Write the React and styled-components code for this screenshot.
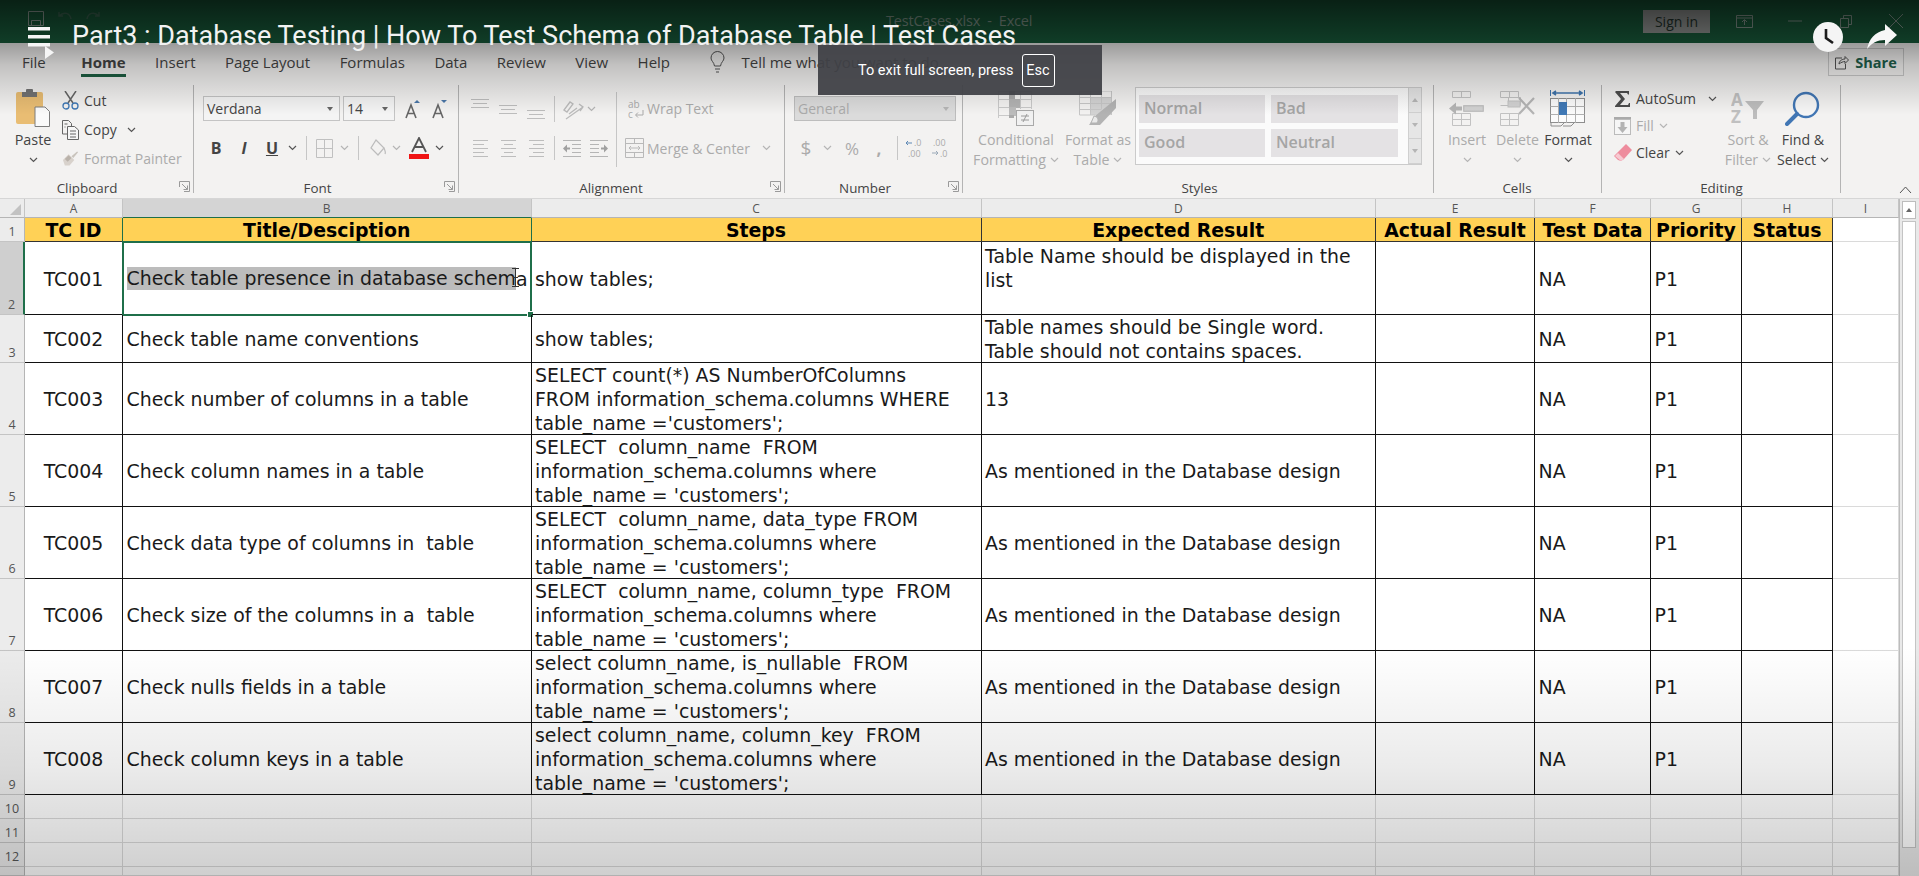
import React from 'react';
import styled, { createGlobalStyle } from 'styled-components';

const UI = "'Open Sans', 'Noto Sans', sans-serif";
const SHEET = "'DejaVu Sans', Verdana, sans-serif";
const DIM = '#ababab';
const INK = '#444444';
const GREEN = '#1f6f4a';

const Global = createGlobalStyle`
  html, body { margin: 0; padding: 0; background: #fff; }
  #root { width: 1919px; height: 876px; }
`;

const Page = styled.div`
  position: relative;
  width: 1919px;
  height: 876px;
  overflow: hidden;
  font-family: ${UI};
  color: ${INK};
  background: #f3f2f1;
`;

/* ---------- window chrome ---------- */
const TitleBar = styled.div`
  height: 43px;
  display: flex;
  align-items: center;
  background: #195f3d;
  color: #9fb5aa;
`;
const Qat = styled.div`
  width: 858px;
  padding-left: 28px;
  display: flex;
  align-items: center;
  gap: 14px;
  flex: none;
  margin-top: -7px;
`;
const DocName = styled.div`
  font-size: 14.5px;
  margin-top: -3px;
  letter-spacing: -0.2px;
  white-space: pre;
  color: #8aa094;
`;
const WindowTools = styled.div`
  margin-left: auto;
  display: flex;
  align-items: center;
  padding-right: 16px;
`;
const SignIn = styled.div`
  width: 67px;
  height: 23px;
  margin-top: -1px;
  background: #9c9f9d;
  color: #24352d;
  font-size: 14px;
  line-height: 23px;
  text-align: center;
`;
const WinIcon = styled.svg`
  display: block;
  flex: none;
  margin-left: ${p => p.$ml}px;
  margin-top: -1px;
`;

const Tabs = styled.div`
  height: 42px;
  box-sizing: border-box;
  padding: 0 15px 4px 22px;
  display: flex;
  align-items: center;
  gap: 29.5px;
  font-size: 15px;
`;
const Tab = styled.div`
  position: relative;
  white-space: nowrap;
  margin-right: ${p => p.$mr || 0}px;
  font-weight: ${p => (p.$active ? 700 : 400)};
  &::after {
    content: ${p => (p.$active ? "''" : 'none')};
    position: absolute;
    left: 0;
    right: 0;
    bottom: -5px;
    height: 3px;
    background: #1d5f42;
  }
`;
const TellMe = styled.div`
  display: flex;
  align-items: center;
  gap: 17px;
  margin-left: 10px;
  white-space: nowrap;
`;
const ShareButton = styled.div`
  margin-left: auto;
  width: 76px;
  height: 28px;
  box-sizing: border-box;
  border: 1px solid #c8c8c8;
  display: flex;
  align-items: center;
  justify-content: center;
  gap: 6px;
  font-size: 14.5px;
  font-weight: 700;
  color: #205f4b;
`;

/* ---------- ribbon ---------- */
const Ribbon = styled.div`
  height: 114px;
  box-sizing: border-box;
  padding-bottom: 5px;
  display: flex;
  position: relative;
  border-bottom: 1px solid #d6d6d6;
`;
const Group = styled.div`
  width: ${p => p.$w}px;
  flex: none;
  box-sizing: border-box;
  display: flex;
  flex-direction: column;
  position: relative;
  &::after {
    content: '';
    position: absolute;
    right: 0;
    top: 0;
    bottom: 0;
    width: 1px;
    background: #b4b4b4;
  }
`;
const GroupBody = styled.div`
  flex: 1;
  display: flex;
  padding-left: ${p => p.$pl || 0}px;
`;
const GroupFoot = styled.div`
  height: 20px;
  margin-bottom: -5px;
  display: grid;
  grid-template-columns: 1fr auto 1fr;
  align-items: center;
  font-size: 13.4px;
  padding-right: 4px;
`;
const FootLabel = styled.div`
  grid-column: 2;
  transform: translateX(${p => p.$dx || 0}px);
`;
const Launcher = styled.svg`
  grid-column: 3;
  justify-self: end;
  display: block;
  margin-top: -3px;
`;
const Stack = styled.div`
  display: flex;
  flex-direction: column;
  width: ${p => (p.$w ? `${p.$w}px` : 'auto')};
  margin-left: ${p => p.$ml || 0}px;
  padding-top: ${p => p.$pt || 0}px;
  flex: none;
`;
const ToolRow = styled.div`
  display: flex;
  align-items: center;
  height: ${p => p.$h || 25}px;
  margin-top: ${p => p.$mt || 0}px;
  color: ${p => (p.$dim ? DIM : INK)};
  font-size: 14px;
  white-space: nowrap;
`;
const Slot = styled.span`
  display: inline-flex;
  align-items: center;
  justify-content: center;
  flex: none;
  width: ${p => p.$w}px;
  margin-left: ${p => p.$ml || 0}px;
  color: ${p => (p.$dim ? DIM : 'inherit')};
  font-size: ${p => p.$fs || 14}px;
  font-weight: ${p => p.$fw || 400};
  font-style: ${p => (p.$it ? 'italic' : 'normal')};
  text-decoration: ${p => (p.$un ? 'underline' : 'none')};
`;
const RowText = styled.span`
  margin-left: ${p => p.$ml || 0}px;
`;
const RuleV = styled.div`
  width: 1px;
  height: ${p => p.$h}px;
  background: #c6c6c6;
  flex: none;
`;
const Combo = styled.div`
  width: ${p => p.$w}px;
  height: 25px;
  margin-left: ${p => p.$ml || 0}px;
  box-sizing: border-box;
  border: 1px solid ${p => (p.$off ? '#bdbdbd' : '#c4c4c4')};
  background: ${p => (p.$off ? '#dbdbdb' : '#f4f4f4')};
  color: ${p => (p.$off ? DIM : INK)};
  display: flex;
  align-items: center;
  justify-content: space-between;
  padding: 0 6px 0 3px;
  font-size: 14px;
`;
const Caret = styled.i`
  width: 0;
  height: 0;
  border: 3.5px solid transparent;
  border-top: 4px solid ${p => (p.$off ? '#b5b5b5' : '#666')};
  border-bottom: 0;
`;
const PasteColumn = styled.div`
  width: 44px;
  margin-left: 11px;
  padding-top: 4px;
  display: flex;
  flex-direction: column;
  align-items: center;
  font-size: 14.4px;
  flex: none;
`;
const PasteLabel = styled.span`
  margin-top: 3px;
  line-height: 20px;
`;
const PasteChev = styled(Slot)`
  margin-top: 7px;
`;
const BigButton = styled.div`
  width: ${p => p.$w}px;
  margin-left: ${p => p.$ml || 0}px;
  flex: none;
  display: flex;
  flex-direction: column;
  align-items: center;
  color: ${p => (p.$dim ? DIM : INK)};
  font-size: 14.2px;
  line-height: 20px;
  white-space: nowrap;
`;
const BigIcon = styled.div`
  height: 37px;
  margin: 5px 0 3px;
  display: flex;
  align-items: center;
  justify-content: center;
`;
const ChevLine = styled.div`
  height: 20px;
  display: flex;
  align-items: center;
  justify-content: center;
  gap: 4px;
`;
const Gallery = styled.div`
  width: 287px;
  height: 78px;
  margin: 2px 0 0 0;
  box-sizing: border-box;
  border: 1px solid #cbcbcb;
  background: #fbfbfb;
  display: grid;
  grid-template-columns: 126px 127px 1fr;
  grid-template-rows: 28px 28px;
  column-gap: 6px;
  row-gap: 6px;
  padding: 7px 0 0 3px;
  flex: none;
  position: relative;
`;
const StyleCell = styled.div`
  background: #e4e2e4;
  color: #a5a5a5;
  font-size: 16px;
  font-weight: 600;
  padding-left: 5px;
  line-height: 27px;
`;
const GalleryScroll = styled.div`
  grid-column: 3;
  grid-row: 1 / 3;
  margin: -7px 0 -8px 4px;
  height: 76px;
  display: flex;
  flex-direction: column;
  background: #e6e6e6;
  border-left: 1px solid #d0d0d0;
`;
const ScrollStep = styled.div`
  flex: 1;
  display: flex;
  align-items: center;
  justify-content: center;
  border-bottom: 1px solid #d0d0d0;
`;
const UpCaret = styled(Caret)`
  transform: rotate(180deg);
`;
const Collapse = styled.svg`
  position: absolute;
  right: 7px;
  bottom: 4px;
`;

/* ---------- sheet ---------- */
const Sheet = styled.div`
  display: grid;
  grid-template-columns: 25px 98px 408.5px 450px 394.5px 159px 116px 91px 91px 66px 20px;
  grid-template-rows: 19px 24px 73px 48px repeat(6, 72px) 24px 24px 24px 9px;
  height: 677px;
  background: #fff;
`;
const ColHead = styled.div`
  background: ${p => (p.$on ? '#d4d4d4' : '#ececec')};
  border-right: 1px solid #c4c4c4;
  border-bottom: 1px solid ${p => (p.$on ? GREEN : '#b5b5b5')};
  font-size: 12px;
  line-height: 19px;
  text-align: center;
  color: #555;
`;
const CornerBox = styled(ColHead)`
  display: flex;
  align-items: flex-end;
  justify-content: flex-end;
  padding: 0 3px 2px 0;
`;
const RowHead = styled.div`
  background: ${p => (p.$on ? '#cfcfcf' : '#ececec')};
  border-right: ${p => (p.$on ? `2px solid ${GREEN}` : '1px solid #b5b5b5')};
  border-bottom: 1px solid #c4c4c4;
  font-size: 12.5px;
  color: #555;
  display: flex;
  align-items: flex-end;
  justify-content: center;
  box-sizing: border-box;
  line-height: 18px;
`;
const Cell = styled.div`
  box-sizing: border-box;
  min-width: 0;
  position: relative;
  display: flex;
  align-items: ${p => (p.$top ? 'flex-start' : 'center')};
  justify-content: ${p => (p.$center ? 'center' : 'flex-start')};
  padding-left: ${p => (p.$center ? 0 : 3.5)}px;
  padding-top: 1.5px;
  font-family: ${SHEET};
  font-size: 18.9px;
  line-height: 24px;
  color: #1a1a1a;
  white-space: pre;
  border-right: 1.5px solid #111;
  border-bottom: 1.5px solid #111;
`;
const HeadCell = styled(Cell)`
  background: #ffd156;
  font-weight: 700;
  color: #000;
  justify-content: center;
  padding-left: 0;
  border-right: 1px solid ${p => (p.$edge ? GREEN : '#333')};
  border-bottom: 1px solid #333;
`;
const BlankCell = styled.div`
  border-right: 1px solid #dadada;
  border-bottom: 1px solid #dadada;
`;
const SelectedBox = styled.div`
  position: absolute;
  left: -1px;
  right: -1.5px;
  top: -1px;
  bottom: -1.5px;
  border: 2px solid ${GREEN};
  pointer-events: none;
  &::after {
    content: '';
    position: absolute;
    right: -4px;
    bottom: -4px;
    width: 5px;
    height: 5px;
    background: ${GREEN};
    border: 1px solid #fff;
  }
`;
const Highlight = styled.span`
  background: #bcbcbc;
  line-height: 23px;
  display: inline-block;
`;
const Scrollbar = styled.div`
  grid-column: 11;
  grid-row: 1 / -1;
  background: #e9e9e9;
  border-left: 1px solid #bdbdbd;
  padding: 2px 3px 0 2px;
  display: flex;
  flex-direction: column;
  gap: 2px;
`;
const ScrollUp = styled.div`
  height: 16px;
  background: #fff;
  border: 1px solid #bdbdbd;
  display: flex;
  align-items: center;
  justify-content: center;
`;
const ScrollThumb = styled.div`
  height: 627px;
  background: #fff;
  border: 1px solid #c4c4c4;
  box-sizing: border-box;
`;

/* ---------- video player overlay ---------- */
const Shade = styled.div`
  position: absolute;
  left: 0;
  right: 0;
  top: 0;
  height: 120px;
  pointer-events: none;
  background: linear-gradient(180deg, rgba(0,0,0,.66) 0, rgba(0,0,0,.36) 43px, rgba(0,0,0,.2) 65px, rgba(0,0,0,0) 115px);
`;
const BottomShade = styled.div`
  position: absolute;
  left: 0;
  right: 0;
  bottom: 0;
  height: 230px;
  pointer-events: none;
  background: linear-gradient(180deg, rgba(0,0,0,0) 0, rgba(0,0,0,.08) 120px, rgba(0,0,0,.19) 100%);
`;
const VideoTitle = styled.div`
  position: absolute;
  left: 72px;
  top: 18px;
  font-family: Roboto, sans-serif;
  font-size: 27px;
  line-height: 36px;
  color: #f2f2f2;
  white-space: nowrap;
`;
const Overlay = styled.svg`
  position: absolute;
  left: ${p => p.$x}px;
  top: ${p => p.$y}px;
`;
const Toast = styled.div`
  position: absolute;
  left: 818px;
  top: 45px;
  width: 284px;
  height: 50px;
  box-sizing: border-box;
  padding-left: 40px;
  background: rgba(64, 65, 70, .94);
  color: #fff;
  display: flex;
  align-items: center;
  gap: 8px;
  font-family: Roboto, sans-serif;
  font-size: 14.5px;
  white-space: nowrap;
`;
const EscKey = styled.div`
  width: 33px;
  height: 33px;
  box-sizing: border-box;
  border: 1px solid #fff;
  border-radius: 3px;
  display: flex;
  align-items: center;
  justify-content: center;
`;
const IBeam = styled.svg`
  position: absolute;
  left: 388px;
  top: 26px;
`;

/* ---------- drawings ---------- */
const Chev = ({ dim }) => (
  <svg width="9" height="6" viewBox="0 0 9 6" style={{ display: 'block', flex: 'none' }}>
    <path d="M1 1l3.5 3.5L8 1" fill="none" stroke={dim ? '#b5b5b5' : '#555'} strokeWidth="1.2" />
  </svg>
);
const LaunchIcon = () => (
  <Launcher width="11" height="11" viewBox="0 0 11 11">
    <path d="M.5 6V.5H10.5V10.5H5M3 3l5.5 5.5M8.5 4.5v4h-4" fill="none" stroke="#9a9a9a" />
  </Launcher>
);
const PasteIcon = () => (
  <svg width="34" height="38" viewBox="0 0 34 38">
    <rect x="0" y="3" width="27" height="32" rx="2" fill="#e9bd73" />
    <rect x="6" y="3" width="15" height="5" fill="#737373" />
    <rect x="10" y="0" width="7" height="4" rx="1" fill="#737373" />
    <path d="M19 18h10l4.500 4.500V37.500H19z" fill="#fafafa" stroke="#7d7d7d" />
  </svg>
);
const CutIcon = () => (
  <svg width="17" height="19" viewBox="0 0 17 19">
    <path d="M3 0l8 12M14 0L6 12" stroke="#666" strokeWidth="1.5" fill="none" />
    <circle cx="4" cy="15" r="3" fill="none" stroke="#3f78b5" strokeWidth="1.3" />
    <circle cx="13" cy="15" r="3" fill="none" stroke="#3f78b5" strokeWidth="1.3" />
  </svg>
);
const CopyIcon = () => (
  <svg width="17" height="20" viewBox="0 0 17 20" fill="none" stroke="#666">
    <path d="M5 14H.5V.5h6l3 3V6" />
    <path d="M5.500 6.500h7l4 3.500v9.500h-11z" fill="#f6f6f6" />
    <path d="M2.500 4h3M2.500 7h1M8 11h6M8 14h6M8 17h6" />
  </svg>
);
const BrushIcon = () => (
  <svg width="18" height="17" viewBox="0 0 18 17">
    <path d="M1 10l6-6 6 6-5 6H3z" fill="#d8d2cc" />
    <path d="M3 9l4-4 3 3-4 4z" fill="#b9b2aa" />
    <path d="M10 6l6-5 1 1-5 6z" fill="#c9c4bd" />
  </svg>
);
const GrowIcon = ({ down }) => (
  <svg width="15" height="20" viewBox="0 0 15 20">
    <path d="M1 19L6 6l5 13M3 14.500h6" fill="none" stroke="#666" strokeWidth="1.600" />
    <path d={down ? 'M9 1h6l-3 3z' : 'M9 4h6l-3-3z'} fill="#4a76a8" />
  </svg>
);
const BordersIcon = () => (
  <svg width="17" height="19" viewBox="0 0 17 19" fill="none" stroke="#c0c0c0">
    <path d="M.5.500h16v18H.500zM.500 9.500h16M8.500.500v18" />
  </svg>
);
const BucketIcon = () => (
  <svg width="17" height="19" viewBox="0 0 17 19" fill="none" stroke="#bcbcbc" strokeWidth="1.200">
    <path d="M7 1l8 8-6 7-7-7zM15 9c1 3 2 4 1 6" />
  </svg>
);
const FontColorIcon = () => (
  <svg width="20" height="23" viewBox="0 0 20 23">
    <path d="M3 15L10 1l7 14M6 10h8" fill="none" stroke="#555" strokeWidth="1.800" />
    <rect y="17" width="20" height="5" fill="#f01414" />
  </svg>
);
const AlignV = ({ y, w = 18 }) => (
  <svg width={w} height="26" viewBox={`0 0 ${w} 26`} stroke="#bdbdbd">
    <path d={`M0 ${y}.500h${w}M2 ${y + 4}.500h${w - 4}M0 ${y + 8}.500h${w}`} />
  </svg>
);
const AlignH = ({ a }) => {
  const short = a === 'l' ? 'M0 4.500h11M0 12.500h11' : a === 'c' ? 'M3 4.500h9M3 12.500h9' : 'M4 4.500h11M4 12.500h11';
  return (
    <svg width="15" height="17" viewBox="0 0 15 17" stroke="#bdbdbd">
      <path d={`M0 .500h15M0 8.500h15M0 16.500h15 ${short}`} />
    </svg>
  );
};
const OrientIcon = () => (
  <svg width="22" height="22" viewBox="0 0 22 22" fill="none" stroke="#bbb" strokeWidth="1.300">
    <path d="M2 12l6-8 3 2-6 8zM7 16l8-6M4 21l17-12M17 6l4 3-3 4" />
  </svg>
);
const IndentIcon = ({ flip }) => (
  <svg width="18" height="17" viewBox="0 0 18 17" style={{ transform: flip ? 'scaleX(-1)' : 'none' }}>
    <path d="M0 .500h18M0 16.500h18M9 4.500h9M9 8.500h9M9 12.500h9" stroke="#b5b5b5" />
    <path d="M0 8.500l4-4v3h3v2H4v3z" fill="#a0a0a0" />
  </svg>
);
const WrapIcon = () => (
  <svg width="17" height="20" viewBox="0 0 17 20">
    <text x="0" y="9" fontSize="10" fontFamily="Open Sans" fill="#aaa">ab</text>
    <text x="0" y="19" fontSize="10" fontFamily="Open Sans" fill="#aaa">c</text>
    <path d="M15 11v5H8M10 13.500L7.500 16l2.500 2.500" fill="none" stroke="#aaa" />
  </svg>
);
const MergeIcon = () => (
  <svg width="19" height="20" viewBox="0 0 19 20" fill="none" stroke="#b9b9b9">
    <path d="M.5.500h18v19H.500zM.500 5.500h18M.500 14.500h18M9.500.500v5M9.500 14.500v5M4 10h11M6 8l-2 2 2 2M13 8l2 2-2 2" />
  </svg>
);
const DecimalIcon = ({ more }) => (
  <svg width="22" height="22" viewBox="0 0 22 22" fontSize="9" fontFamily="Open Sans" fill="#aaa">
    {more ? (
      <>
        <path d="M2 6h6M4 4L2 6l2 2" stroke="#5f89b5" fill="none" />
        <text x="10" y="9">.0</text>
        <text x="4" y="20">.00</text>
      </>
    ) : (
      <>
        <text x="4" y="9">.00</text>
        <path d="M3 16h6M7 14l2 2-2 2" stroke="#9aa9b8" fill="none" />
        <text x="11" y="20">.0</text>
      </>
    )}
  </svg>
);
const CondIcon = () => (
  <svg width="36" height="35" viewBox="0 0 36 35">
    <path d="M0 .500h33M0 8.500h33M0 16.500h33M0 24.500h20M.5 0v27M11.500 0v27M22.500 0v18M33.500 0v18" stroke="#c9c9c9" />
    <rect x="11" y="0" width="6" height="9" fill="#a9a9a9" />
    <rect x="11" y="8" width="11" height="9" fill="#b3b3b3" />
    <rect x="11" y="16" width="7" height="9" fill="#bcbcbc" />
    <rect x="11" y="24" width="5" height="3" fill="#a9a9a9" />
    <rect x="18.500" y="19.500" width="17" height="15" fill="#f1f1f1" stroke="#a9a9a9" />
    <path d="M23 25h8M23 29h8M29 23l-4 8" stroke="#9a9a9a" fill="none" />
  </svg>
);
const TableIcon = () => (
  <svg width="38" height="35" viewBox="0 0 38 35">
    <rect x="11" y="6" width="22" height="18" fill="#d3d3d3" />
    <path d="M.5 0h32v24M.5 0v24h16M.500 6.500h32M.500 12.500h32M.500 18.500h22M11.500 0v24M22.500 0v18" stroke="#c6c6c6" fill="none" />
    <path d="M37 8v9L21 34h-11l6-9z" fill="#b3b3b3" />
    <path d="M15 25c4 1 5 4 3 7h-6z" fill="#e9e9e9" stroke="#b3b3b3" />
  </svg>
);
const InsertIcon = () => (
  <svg width="36" height="35" viewBox="0 0 36 35" fill="none" stroke="#c2c2c2">
    <path d="M3.500.500h18v6h-18zM12.500.500v6M14.500 14.500h20v6h-20zM24.500 14.500v6M3.500 22.500h18v12h-18zM3.500 28.500h18M12.500 22.500v12" />
    <rect x="15" y="15" width="19" height="5" fill="#d2d2d2" />
    <path d="M0 17.500l7-6v4h6v4H7v4z" fill="#b5b5b5" stroke="none" />
  </svg>
);
const DeleteIcon = () => (
  <svg width="36" height="35" viewBox="0 0 36 35" fill="none" stroke="#c2c2c2">
    <path d="M.5.500h18v6H.500zM9.500.500v6M8.500 6.500h12v8h-12zM.500 14.500h8M.500 22.500h18v12H.500zM.500 28.500h18M9.500 22.500v12" />
    <rect x="8" y="10" width="12" height="6" fill="#d2d2d2" />
    <path d="M19 7l15 16M34 7L19 23" stroke="#b5b5b5" strokeWidth="2.200" />
  </svg>
);
const FormatIcon = () => (
  <svg width="36" height="37" viewBox="0 0 36 37" fill="none">
    <path d="M.5 0v6M34.500 0v6" stroke="#3f74ac" />
    <path d="M3 3h29M6 1L3 3l3 2M29 1l3 2-3 2" stroke="#3f74ac" strokeWidth="1.600" />
    <rect x=".5" y="8.500" width="34" height="24" fill="#fbfbfb" stroke="#8e8e8e" />
    <path d="M.5 16.500h34M.5 24.500h34M8.500 8v25M16.500 8v25M25.500 8v25" stroke="#b0b0b0" />
    <rect x="9" y="12" width="8" height="13" fill="#3f78b5" />
    <path d="M1 33v3h10l3-3M13 36h8l3-3" stroke="#8e8e8e" />
  </svg>
);
const SigmaIcon = () => (
  <svg width="15" height="16" viewBox="0 0 15 16">
    <path d="M1 0h13v3.500h-1L12 2H5l5 6-5 6h8l1-2h1v4H0v-1l6-7L0 1z" fill="#4d4d4d" />
  </svg>
);
const FillIcon = () => (
  <svg width="17" height="18" viewBox="0 0 17 18">
    <rect x=".5" y="2.500" width="16" height="15" fill="#f6f6f6" stroke="#bbb" />
    <rect width="17" height="2" fill="#aaa" />
    <path d="M6.500 5h4v5h3l-5 6-5-6h3z" fill="#b4b4b4" />
  </svg>
);
const EraserIcon = () => (
  <svg width="18" height="17" viewBox="0 0 18 17">
    <path d="M12 0l6 6-8 9-3 2-3-1-4-4z" fill="#ee8c9d" />
    <path d="M1 12l3-3 6 6-3 2z" fill="#f7c9d1" />
  </svg>
);
const SortIcon = () => (
  <svg width="34" height="33" viewBox="0 0 34 33">
    <text x="0" y="14" fontFamily="Open Sans" fontSize="17" fontWeight="700" fill="#c0c0c0">A</text>
    <text x="0" y="31" fontFamily="Open Sans" fontSize="17" fontWeight="700" fill="#c0c0c0">Z</text>
    <path d="M14 9h19l-7 9v9h-4v-9z" fill="#bdbdbd" />
  </svg>
);
const SearchIcon = () => (
  <svg width="36" height="35" viewBox="0 0 36 35" fill="none">
    <circle cx="21" cy="14" r="12" stroke="#4176b4" strokeWidth="2.400" fill="#f6f6f6" />
    <path d="M12 23L2 33" stroke="#4176b4" strokeWidth="4" strokeLinecap="round" />
  </svg>
);

const columnsHead = ['A', 'B', 'C', 'D', 'E', 'F', 'G', 'H', 'I'];
const titles = ['TC ID', 'Title/Desciption', 'Steps', 'Expected Result', 'Actual Result', 'Test Data', 'Priority', 'Status'];
const designNote = 'As mentioned in the Database design';
const cases = [
  ['TC001', null, 'show tables;', 'Table Name should be displayed in the\nlist'],
  ['TC002', 'Check table name conventions', 'show tables;', 'Table names should be Single word.\nTable should not contains spaces.'],
  ['TC003', 'Check number of columns in a table', 'SELECT count(*) AS NumberOfColumns\nFROM information_schema.columns WHERE\ntable_name =\'customers\';', '13'],
  ['TC004', 'Check column names in a table', "SELECT  column_name  FROM\ninformation_schema.columns where\ntable_name = 'customers';", designNote],
  ['TC005', 'Check data type of columns in  table', "SELECT  column_name, data_type FROM\ninformation_schema.columns where\ntable_name = 'customers';", designNote],
  ['TC006', 'Check size of the columns in a  table', "SELECT  column_name, column_type  FROM\ninformation_schema.columns where\ntable_name = 'customers';", designNote],
  ['TC007', 'Check nulls fields in a table', "select column_name, is_nullable  FROM\ninformation_schema.columns where\ntable_name = 'customers';", designNote],
  ['TC008', 'Check column keys in a table', "select column_name, column_key  FROM\ninformation_schema.columns where\ntable_name = 'customers';", designNote],
];

function Grid() {
  return (
    <Sheet>
      <CornerBox>
        <svg width="11" height="11" viewBox="0 0 11 11"><path d="M11 0v11H0z" fill="#c2c2c2" /></svg>
      </CornerBox>
      {columnsHead.map(c => <ColHead key={c} $on={c === 'B'}>{c}</ColHead>)}
      <Scrollbar>
        <ScrollUp><UpCaret /></ScrollUp>
        <ScrollThumb />
      </Scrollbar>

      <RowHead>1</RowHead>
      {titles.map((t, i) => <HeadCell key={t} $edge={i < 2}>{t}</HeadCell>)}
      <BlankCell />

      {cases.map((row, i) => (
        <React.Fragment key={row[0]}>
          <RowHead $on={i === 0}>{i + 2}</RowHead>
          <Cell $center>{row[0]}</Cell>
          <Cell>
            {row[1] || (
              <>
                <Highlight>Check table presence in database schem</Highlight>a
                <SelectedBox />
                <IBeam width="9" height="19" viewBox="0 0 9 19">
                  <path d="M1 .5h7M4.500.500v18M1 18.500h7M2 9.500h5" stroke="#333" fill="none" />
                </IBeam>
              </>
            )}
          </Cell>
          <Cell>{row[2]}</Cell>
          <Cell $top={i === 0}>{row[3]}</Cell>
          <Cell />
          <Cell>NA</Cell>
          <Cell>P1</Cell>
          <Cell />
          <BlankCell />
        </React.Fragment>
      ))}

      {[10, 11, 12, 13].map(n => (
        <React.Fragment key={n}>
          <RowHead>{n < 13 ? n : ''}</RowHead>
          {columnsHead.map(c => <BlankCell key={c} />)}
        </React.Fragment>
      ))}
    </Sheet>
  );
}

export default function App() {
  return (
    <Page>
      <Global />
      <TitleBar>
        <Qat>
          <svg width="16" height="15" viewBox="0 0 16 15" fill="none" stroke="#9aa9a1"><path d="M.5.500h15v14H.500zM3.500 9.500h9v5h-9z" /></svg>
          <svg width="42" height="14" viewBox="0 0 42 14" fill="none" stroke="#3f6a56" strokeWidth="1.500"><path d="M1 5c5-5 11-3 12 3M1 1v4h4M41 5c-5-5-11-3-12 3M41 1v4h-4" /></svg>
        </Qat>
        <DocName>TestCases.xlsx  -  Excel</DocName>
        <WindowTools>
          <SignIn>Sign in</SignIn>
          <WinIcon $ml={26} width="17" height="13" viewBox="0 0 17 13" fill="none" stroke="#8c9f96">
            <path d="M.5.500h16v12H.500zM.500 3h16M8.500 10V5M6 7l2.500-2.500L11 7" />
          </WinIcon>
          <WinIcon $ml={35} width="14" height="2" viewBox="0 0 14 2"><path d="M0 1h14" stroke="#8c9f96" /></WinIcon>
          <WinIcon $ml={38} width="12" height="13" viewBox="0 0 12 13" fill="none" stroke="#8c9f96">
            <path d="M.5 3.500h8v9h-8zM3.500 3V.500h8v9H9" />
          </WinIcon>
          <WinIcon $ml={37} width="14" height="14" viewBox="0 0 14 14"><path d="M0 0l14 14M14 0L0 14" stroke="#8c9f96" /></WinIcon>
        </WindowTools>
      </TitleBar>

      <Tabs>
        <Tab $mr={6}>File</Tab>
        <Tab $active>Home</Tab>
        <Tab>Insert</Tab>
        <Tab>Page Layout</Tab>
        <Tab>Formulas</Tab>
        <Tab>Data</Tab>
        <Tab>Review</Tab>
        <Tab>View</Tab>
        <Tab>Help</Tab>
        <TellMe>
          <svg width="15" height="22" viewBox="0 0 15 22" fill="none" stroke="#555"><path d="M4.500 15C4 11 1 10 1 7a6.500 6.500 0 0 1 13 0c0 3-3 4-3.500 8zM5 18h5M6 21h3" /></svg>
          Tell me what you want to do
        </TellMe>
        <ShareButton>
          <svg width="14" height="15" viewBox="0 0 14 15" fill="none" stroke="#555"><path d="M7 3H.5v11h10V9M4 9c0-3 3-5 6-5V1.500L13.500 5 10 8.500V6.500C8 6.500 6 7.500 4 9z" /></svg>
          Share
        </ShareButton>
      </Tabs>

      <Ribbon>
        <Group $w={194}>
          <GroupBody>
            <PasteColumn>
              <PasteIcon />
              <PasteLabel>Paste</PasteLabel>
              <PasteChev $w={10}><Chev /></PasteChev>
            </PasteColumn>
            <Stack $ml={7} $pt={1}>
              <ToolRow $h={29}><Slot $w={17}><CutIcon /></Slot><RowText $ml={5}>Cut</RowText></ToolRow>
              <ToolRow $h={29}><Slot $w={17}><CopyIcon /></Slot><RowText $ml={5}>Copy</RowText><Slot $w={9} $ml={10}><Chev /></Slot></ToolRow>
              <ToolRow $h={29} $dim><Slot $w={17}><BrushIcon /></Slot><RowText $ml={5}>Format Painter</RowText></ToolRow>
            </Stack>
          </GroupBody>
          <GroupFoot><FootLabel $dx={-8}>Clipboard</FootLabel><LaunchIcon /></GroupFoot>
        </Group>

        <Group $w={265}>
          <GroupBody $pl={9}>
            <Stack $pt={11}>
              <ToolRow>
                <Combo $w={137}>Verdana<Caret /></Combo>
                <Combo $w={52} $ml={3}>14<Caret /></Combo>
                <Slot $w={15} $ml={10}><GrowIcon /></Slot>
                <Slot $w={15} $ml={12}><GrowIcon down /></Slot>
              </ToolRow>
              <ToolRow $h={30} $mt={12}>
                <Slot $w={26} $fw={700} $fs={16}>B</Slot>
                <Slot $w={30} $it $fw={700} $fs={16}>I</Slot>
                <Slot $w={26} $un $fw={700} $fs={16}>U</Slot>
                <Slot $w={14}><Chev /></Slot>
                <Slot $w={14}><RuleV $h={24} /></Slot>
                <Slot $w={22}><BordersIcon /></Slot>
                <Slot $w={18}><Chev dim /></Slot>
                <Slot $w={10}><RuleV $h={24} /></Slot>
                <Slot $w={28}><BucketIcon /></Slot>
                <Slot $w={10}><Chev dim /></Slot>
                <Slot $w={20} $ml={8}><FontColorIcon /></Slot>
                <Slot $w={10} $ml={5}><Chev /></Slot>
              </ToolRow>
            </Stack>
          </GroupBody>
          <GroupFoot><FootLabel $dx={-7}>Font</FootLabel><LaunchIcon /></GroupFoot>
        </Group>

        <Group $w={326}>
          <GroupBody $pl={7}>
            <Stack $w={150} $pt={11}>
              <ToolRow>
                <Slot $w={28}><AlignV y={3} /></Slot>
                <Slot $w={28}><AlignV y={9} /></Slot>
                <Slot $w={28}><AlignV y={14} /></Slot>
                <Slot $w={9}><RuleV $h={26} /></Slot>
                <Slot $w={28}><OrientIcon /></Slot>
                <Slot $w={9}><Chev dim /></Slot>
              </ToolRow>
              <ToolRow $h={30} $mt={12}>
                <Slot $w={28}><AlignH a="l" /></Slot>
                <Slot $w={28}><AlignH a="c" /></Slot>
                <Slot $w={28}><AlignH a="r" /></Slot>
                <Slot $w={9}><RuleV $h={24} /></Slot>
                <Slot $w={26}><IndentIcon /></Slot>
                <Slot $w={28}><IndentIcon flip /></Slot>
              </ToolRow>
            </Stack>
            <Stack $pt={7}>
              <RuleV $h={75} />
            </Stack>
            <Stack $pt={11} $ml={8}>
              <ToolRow $dim><Slot $w={18} $ml={2}><WrapIcon /></Slot><RowText $ml={2}>Wrap Text</RowText></ToolRow>
              <ToolRow $h={30} $mt={12} $dim><Slot $w={19}><MergeIcon /></Slot><RowText $ml={3}>Merge &amp; Center</RowText><Slot $w={9} $ml={12}><Chev dim /></Slot></ToolRow>
            </Stack>
          </GroupBody>
          <GroupFoot><FootLabel $dx={-9}>Alignment</FootLabel><LaunchIcon /></GroupFoot>
        </Group>

        <Group $w={178}>
          <GroupBody $pl={9}>
            <Stack $pt={11}>
              <ToolRow><Combo $w={162} $off>General<Caret $off /></Combo></ToolRow>
              <ToolRow $h={30} $mt={12} $dim>
                <Slot $w={24} $fs={19}>$</Slot>
                <Slot $w={18}><Chev dim /></Slot>
                <Slot $w={32} $fs={17}>%</Slot>
                <Slot $w={22} $fw={700} $fs={17}>,</Slot>
                <Slot $w={14}><RuleV $h={24} /></Slot>
                <Slot $w={22}><DecimalIcon more /></Slot>
                <Slot $w={22} $ml={3}><DecimalIcon /></Slot>
              </ToolRow>
            </Stack>
          </GroupBody>
          <GroupFoot><FootLabel $dx={-7}>Number</FootLabel><LaunchIcon /></GroupFoot>
        </Group>

        <Group $w={471}>
          <GroupBody $pl={11}>
            <BigButton $w={84} $dim>
              <BigIcon><CondIcon /></BigIcon>
              Conditional
              <ChevLine>Formatting <Chev dim /></ChevLine>
            </BigButton>
            <BigButton $w={74} $ml={3} $dim>
              <BigIcon><TableIcon /></BigIcon>
              Format as
              <ChevLine>Table <Chev dim /></ChevLine>
            </BigButton>
            <Gallery>
              <StyleCell>Normal</StyleCell>
              <StyleCell>Bad</StyleCell>
              <GalleryScroll>
                <ScrollStep><UpCaret $off /></ScrollStep>
                <ScrollStep><Caret $off /></ScrollStep>
                <ScrollStep><Caret $off /></ScrollStep>
              </GalleryScroll>
              <StyleCell>Good</StyleCell>
              <StyleCell>Neutral</StyleCell>
            </Gallery>
          </GroupBody>
          <GroupFoot><FootLabel $dx={3}>Styles</FootLabel></GroupFoot>
        </Group>

        <Group $w={168}>
          <GroupBody $pl={10}>
            <BigButton $w={46} $dim>
              <BigIcon><InsertIcon /></BigIcon>
              Insert
              <ChevLine><Chev dim /></ChevLine>
            </BigButton>
            <BigButton $w={55} $dim>
              <BigIcon><DeleteIcon /></BigIcon>
              Delete
              <ChevLine><Chev dim /></ChevLine>
            </BigButton>
            <BigButton $w={46}>
              <BigIcon><FormatIcon /></BigIcon>
              Format
              <ChevLine><Chev /></ChevLine>
            </BigButton>
          </GroupBody>
          <GroupFoot><FootLabel $dx={1}>Cells</FootLabel></GroupFoot>
        </Group>

        <Group $w={239}>
          <GroupBody $pl={12}>
            <Stack $w={112}>
              <ToolRow $h={27}><Slot $w={17}><SigmaIcon /></Slot><RowText $ml={5}>AutoSum</RowText><Slot $w={9} $ml={12}><Chev /></Slot></ToolRow>
              <ToolRow $h={27} $dim><Slot $w={17}><FillIcon /></Slot><RowText $ml={5}>Fill</RowText><Slot $w={9} $ml={5}><Chev dim /></Slot></ToolRow>
              <ToolRow $h={27}><Slot $w={18}><EraserIcon /></Slot><RowText $ml={4}>Clear</RowText><Slot $w={9} $ml={5}><Chev /></Slot></ToolRow>
            </Stack>
            <BigButton $w={44} $dim>
              <BigIcon><SortIcon /></BigIcon>
              Sort &amp;
              <ChevLine>Filter <Chev dim /></ChevLine>
            </BigButton>
            <BigButton $w={60} $ml={3}>
              <BigIcon><SearchIcon /></BigIcon>
              Find &amp;
              <ChevLine>Select <Chev /></ChevLine>
            </BigButton>
          </GroupBody>
          <GroupFoot><FootLabel $dx={2}>Editing</FootLabel></GroupFoot>
        </Group>

        <Collapse width="13" height="8" viewBox="0 0 13 8"><path d="M1 7l5.500-6L12 7" fill="none" stroke="#555" /></Collapse>
      </Ribbon>

      <Grid />

      <Shade />
      <BottomShade />
      <Overlay $x={28} $y={26} width="28" height="38" viewBox="0 0 28 38" fill="#f5f5f5">
        <rect width="22" height="3.500" y="1" />
        <rect width="22" height="3.500" y="9" />
        <rect width="22" height="3.500" y="17" />
        <path d="M17 20l9 6.500-9 6.500z" />
      </Overlay>
      <VideoTitle>Part3 : Database Testing | How To Test Schema of Database Table | Test Cases</VideoTitle>
      <Overlay $x={1813} $y={22} width="30" height="30" viewBox="0 0 30 30">
        <circle cx="15" cy="15" r="15" fill="#f4f4f4" />
        <path d="M13 7v9l7 5" fill="none" stroke="#1c1c1c" strokeWidth="2.600" />
      </Overlay>
      <Overlay $x={1867} $y={24} width="30" height="25" viewBox="0 0 30 25">
        <path d="M18 0l12 11-12 11v-6C10 16 5 19 0 25c2-10 8-17 18-19z" fill="#f7f7f7" />
      </Overlay>
      <Toast>
        To exit full screen, press
        <EscKey>Esc</EscKey>
      </Toast>
    </Page>
  );
}
